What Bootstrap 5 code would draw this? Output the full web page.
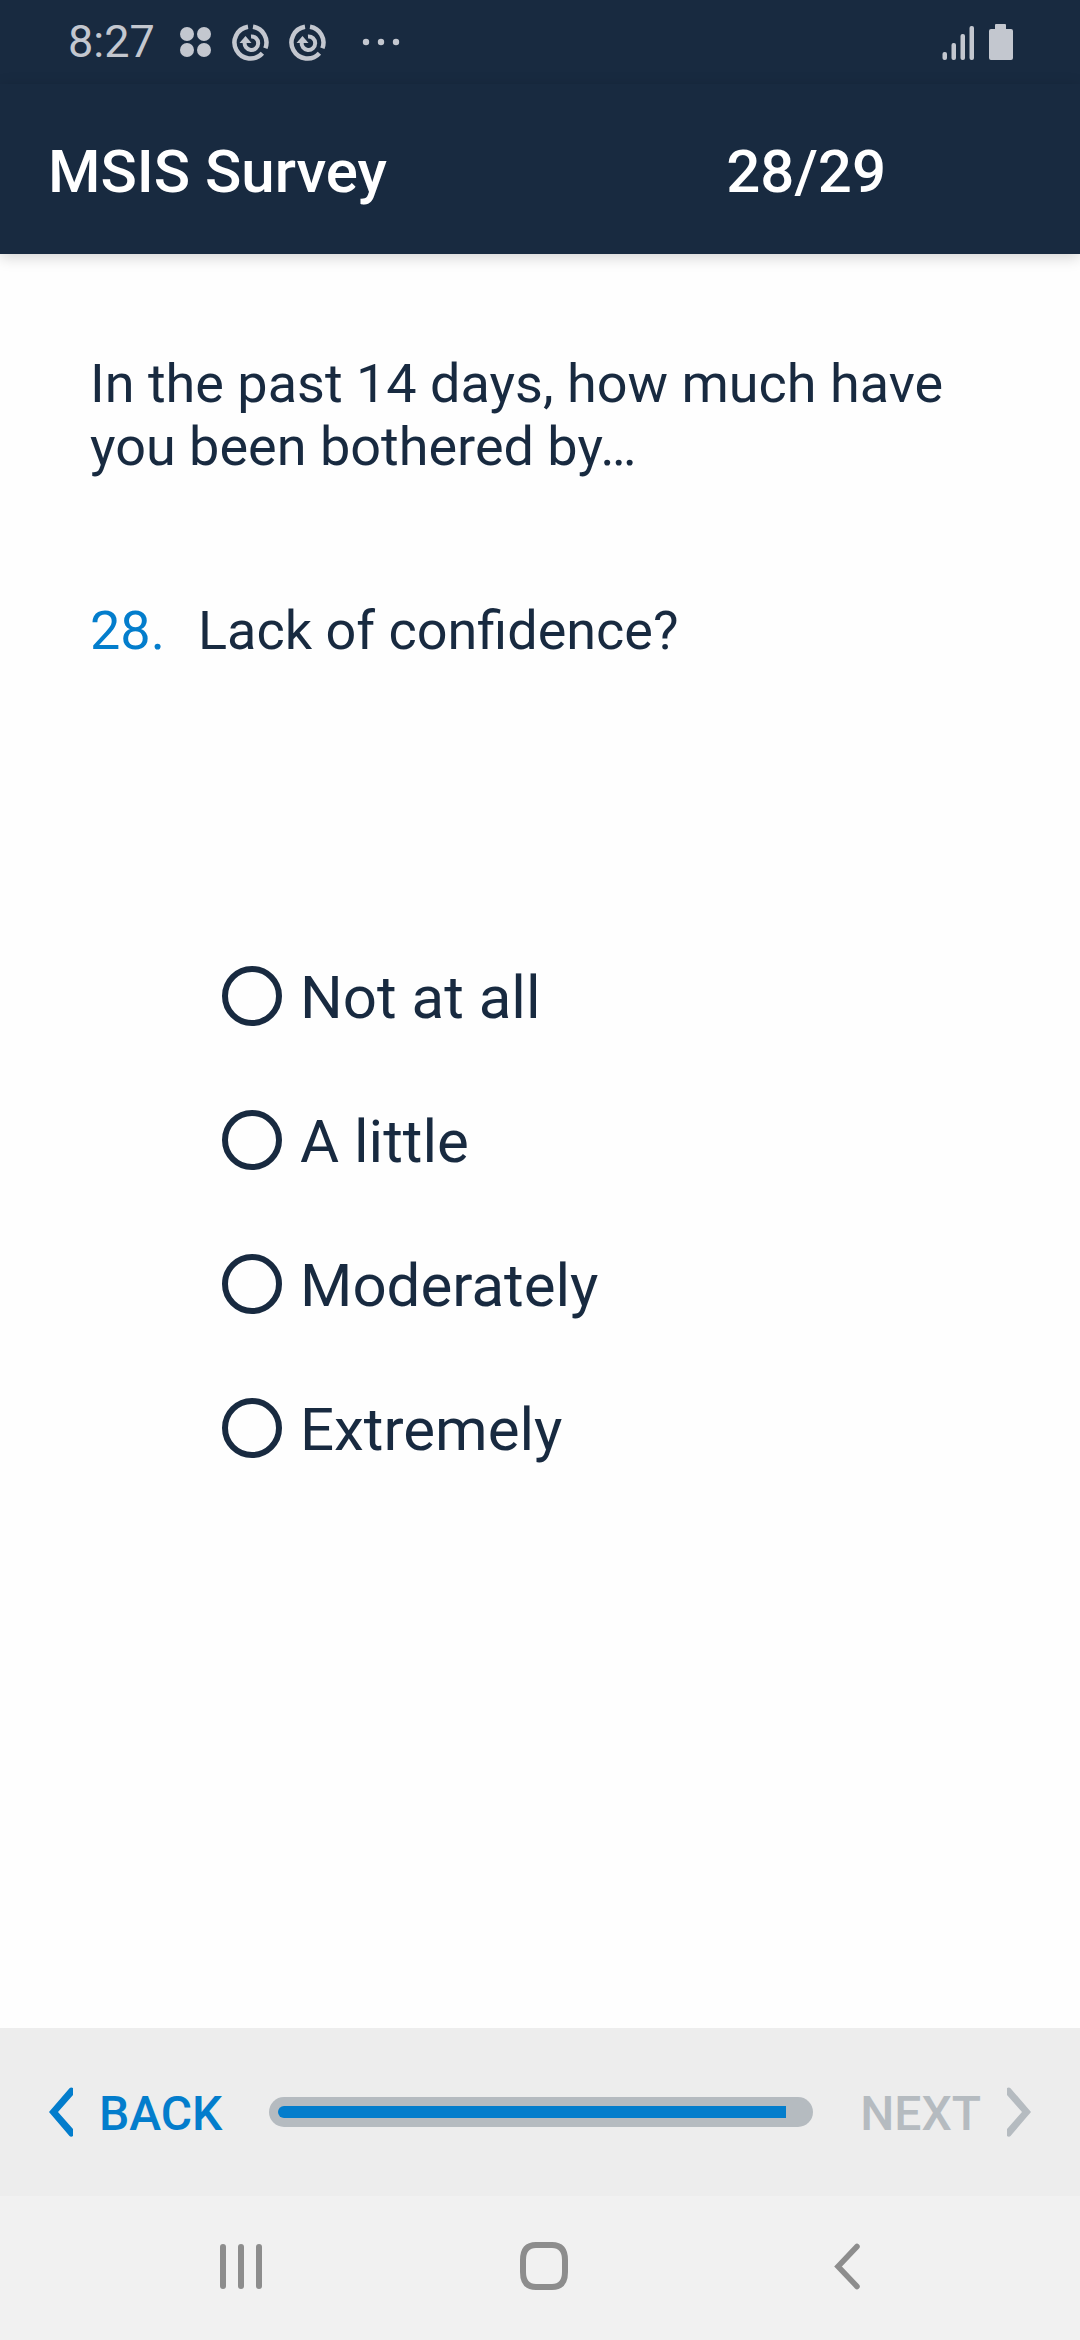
<!DOCTYPE html>
<html lang="en">
<head>
<meta charset="utf-8">
<meta name="viewport" content="width=device-width, initial-scale=1">
<title>MSIS Survey</title>
<link href="https://cdn.jsdelivr.net/npm/bootstrap@5.3.0/dist/css/bootstrap.min.css" rel="stylesheet">
<style>
  :root { --ink: #182a40; --accent: #037dcc; --muted: #b5bbc0; --status: #c3c7cf; }
  body { font-family: Roboto, "Liberation Sans", sans-serif; color: var(--ink); background: #fefefe; }
  svg { display: block; flex: none; }
  .bg-ink { background: var(--ink); }
  .status-bar { height: 84px; padding: 0 67px 0 68px; color: var(--status); font-size: 45px; line-height: 54px; }
  .status-icons { gap: 20px; margin-left: 24px; }
  .status-more { margin-left: 16px; }
  .title-bar { height: 170px; padding: 6px 194px 0 48px; box-shadow: 0 3px 14px rgba(0,0,0,.18); }
  .title-text { font-size: 60px; line-height: 70px; font-weight: 500; color: #fff; }
  .survey { padding: 98px 90px 0; }
  .question-text { font-size: 54px; line-height: 63px; }
  .question-item { margin-top: 121px; gap: 33px; }
  .question-number { color: var(--accent); }
  .answers { margin: 298px 0 0 132px; gap: 72px; }
  .answer { gap: 18px; min-height: 72px; padding: 0; margin: 0; }
  .answer .form-check-input { float: none; margin: 0; width: 60px; height: 60px; border: 6px solid var(--ink); background-color: transparent; flex: none; }
  .answer .form-check-input:checked { background-color: var(--accent); }
  .answer .form-check-label { font-size: 60px; line-height: 68px; padding-top: 4px; }
  .pager { height: 168px; padding: 0 48px; background: #ededed; }
  .pager .btn { --bs-btn-padding-x: 0; --bs-btn-padding-y: 0; --bs-btn-border-width: 0; --bs-btn-font-size: 48px; --bs-btn-line-height: 56px; --bs-btn-font-weight: 500; --bs-btn-color: var(--accent); --bs-btn-disabled-color: var(--muted); --bs-btn-disabled-opacity: 1; gap: 26px; }
  .pager .btn span { padding-top: 4px; }
  .survey-progress { height: 30px; padding: 9px; margin: 0 47px; border-radius: 15px; background: var(--muted); }
  .survey-progress .progress-bar { height: 12px; border-radius: 6px 0 0 6px; background: var(--accent); }
  .system-nav { height: 144px; background: #f1f1f1; padding: 0 82px 4px 89px; }
  .system-nav .btn { --bs-btn-border-width: 0; --bs-btn-padding-y: 24px; color: #8d8d8d; }
</style>
<script src="https://cdn.jsdelivr.net/npm/bootstrap@5.3.0/dist/js/bootstrap.bundle.min.js" defer></script>
</head>
<body class="min-vh-100 d-flex flex-column">
<svg class="d-none" aria-hidden="true">
  <symbol id="sync" viewBox="0 0 37 37">
    <g fill="none" stroke="currentColor">
      <path d="M21 2.700A16 16 0 0 1 33.400 24.200M30.400 29.200A16 16 0 1 1 16 2.700" stroke-width="4.500"/>
      <path d="M19 12.400A6.800 6.800 0 1 1 12.700 18" stroke-width="4"/>
    </g>
    <path d="M7.500 19L13.500 12L19.500 19Z" fill="currentColor"/>
  </symbol>
</svg>

<header class="bg-ink">
  <div class="status-bar d-flex align-items-center">
    <span>8:27</span>
    <div class="status-icons d-flex align-items-center">
      <svg width="33" height="32" fill="currentColor" aria-hidden="true"><circle cx="8" cy="8" r="7"/><circle cx="25" cy="8" r="7"/><circle cx="8" cy="24" r="7"/><circle cx="25" cy="24" r="7"/></svg>
      <svg width="37" height="37" aria-hidden="true"><use href="#sync"/></svg>
      <svg width="37" height="37" aria-hidden="true"><use href="#sync"/></svg>
      <svg class="status-more" width="38" height="8" fill="currentColor" aria-hidden="true"><circle cx="4" cy="4" r="3.200"/><circle cx="19" cy="4" r="3.200"/><circle cx="34" cy="4" r="3.200"/></svg>
    </div>
    <svg class="ms-auto" width="72" height="36" viewBox="0 0 72 36" fill="currentColor" aria-hidden="true">
      <rect x="1.500" y="28" width="4.500" height="8" rx="2"/><rect x="10.500" y="19" width="4.500" height="17" rx="2"/><rect x="19.500" y="10" width="4.500" height="26" rx="2"/><rect x="28.500" y="2" width="4.500" height="34" rx="2"/>
      <path d="M54 1q0-1 1-1h9q1 0 1 1v4h5q2 0 2 2v27q0 2-2 2H50q-2 0-2-2V7q0-2 2-2h4z"/>
    </svg>
  </div>
  <div class="title-bar d-flex align-items-center justify-content-between">
    <h1 class="title-text m-0">MSIS Survey</h1>
    <span class="title-text">28/29</span>
  </div>
</header>

<main class="survey flex-grow-1">
  <p class="question-text m-0">In the past 14 days, how much have you been bothered by…</p>
  <h2 class="question-text question-item fw-normal mb-0 d-flex" id="question"><span class="question-number">28.</span><span>Lack of confidence?</span></h2>
  <div class="answers d-flex flex-column" role="radiogroup" aria-labelledby="question">
    <div class="answer form-check d-flex align-items-center"><input class="form-check-input" type="radio" name="answer" id="a1"><label class="form-check-label" for="a1">Not at all</label></div>
    <div class="answer form-check d-flex align-items-center"><input class="form-check-input" type="radio" name="answer" id="a2"><label class="form-check-label" for="a2">A little</label></div>
    <div class="answer form-check d-flex align-items-center"><input class="form-check-input" type="radio" name="answer" id="a3"><label class="form-check-label" for="a3">Moderately</label></div>
    <div class="answer form-check d-flex align-items-center"><input class="form-check-input" type="radio" name="answer" id="a4"><label class="form-check-label" for="a4">Extremely</label></div>
  </div>
</main>

<footer>
  <div class="pager d-flex align-items-center">
    <button type="button" class="btn d-flex align-items-center"><svg width="25" height="50" viewBox="0 0 25 50" fill="currentColor" aria-hidden="true"><path d="M1 25L21.500 1.200Q23 0 25 1V8L10 25L25 42V49Q23 50.500 21.500 49Z"/></svg><span>BACK</span></button>
    <div class="survey-progress flex-grow-1" role="progressbar" aria-label="Survey progress" aria-valuenow="28" aria-valuemin="0" aria-valuemax="29">
      <div class="progress-bar" style="width: 96.55%"></div>
    </div>
    <button type="button" class="btn d-flex align-items-center" disabled><span>NEXT</span><svg width="25" height="50" viewBox="0 0 25 50" fill="currentColor" aria-hidden="true"><path d="M24 25L3.500 1.200Q2 0 0 1V8L15 25L0 42V49Q2 50.500 3.500 49Z"/></svg></button>
  </div>
  <nav class="system-nav row g-0 align-items-center" aria-label="System">
    <div class="col d-flex justify-content-center"><button type="button" class="btn" aria-label="Recent apps"><svg width="42" height="48" viewBox="0 0 42 48" fill="currentColor"><rect y="2" width="6" height="45" rx="3"/><rect x="18" y="2" width="6" height="45" rx="3"/><rect x="36" y="2" width="6" height="45" rx="3"/></svg></button></div>
    <div class="col d-flex justify-content-center"><button type="button" class="btn" aria-label="Home"><svg width="48" height="48" viewBox="0 0 48 48" fill="none" stroke="currentColor" stroke-width="6"><path d="M16 3H32Q45 3 45 18V30Q45 45 32 45H16Q3 45 3 30V18Q3 3 16 3Z"/></svg></button></div>
    <div class="col d-flex justify-content-center"><button type="button" class="btn" aria-label="Back"><svg width="26" height="48" viewBox="0 0 26 48" fill="none" stroke="currentColor" stroke-width="5.500" stroke-linecap="round"><path d="M23 4.500L4 24.500L23 44.500"/></svg></button></div>
  </nav>
</footer>
</body>
</html>
